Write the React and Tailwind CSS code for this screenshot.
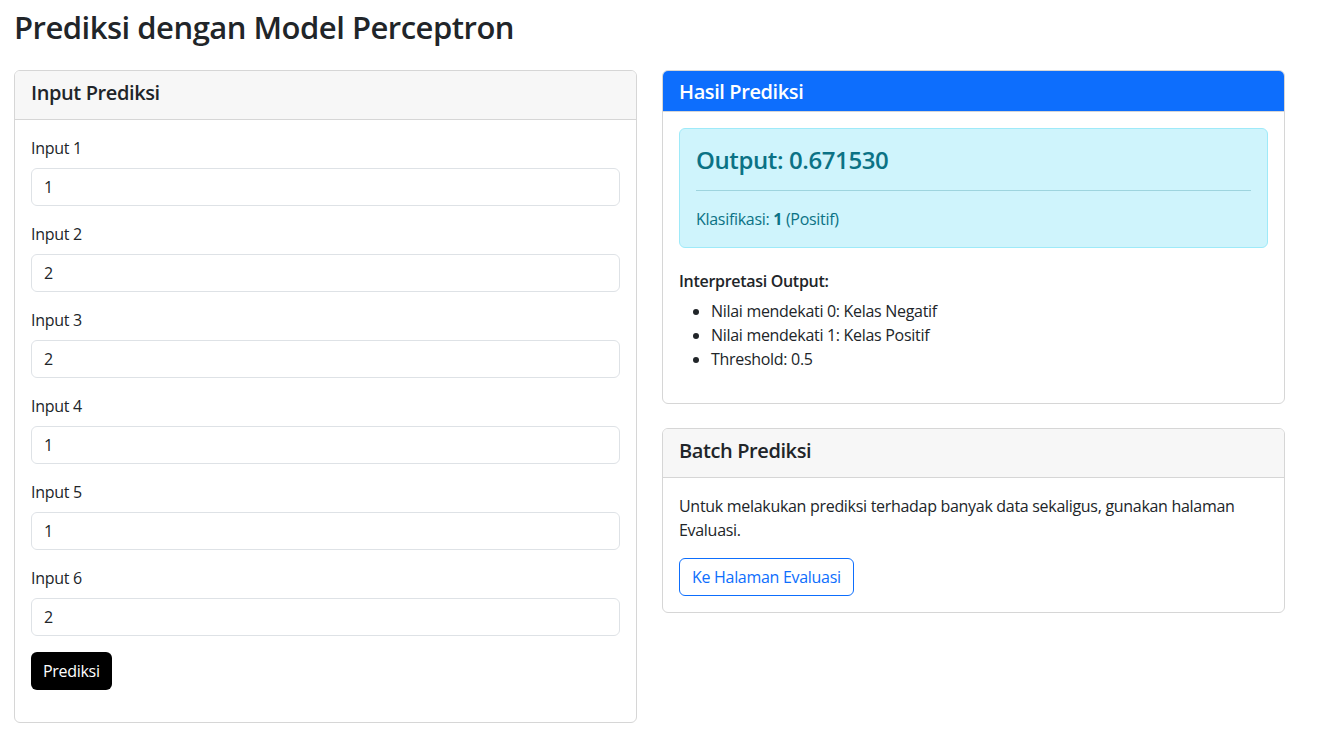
const inputs = [
  { label: 'Input 1', value: '1' },
  { label: 'Input 2', value: '2' },
  { label: 'Input 3', value: '2' },
  { label: 'Input 4', value: '1' },
  { label: 'Input 5', value: '1' },
  { label: 'Input 6', value: '2' },
];

export default function App() {
  return (
    <div className="min-h-screen bg-white pl-[14px] pr-[32px] text-[#212529] font-['Open_Sans',sans-serif] tracking-[-0.3px]">
      <h1 className="pt-[3px] text-[31px] leading-[48px] font-semibold tracking-[-0.5px] mb-[19px]">Prediksi dengan Model Perceptron</h1>

      <div className="grid grid-cols-2 gap-[25px] items-start">
        {/* Input card */}
        <div className="border border-[#d6d6d6] rounded-md overflow-hidden">
          <div className="bg-[#f7f7f7] border-b border-[#d6d6d6] px-4 pt-[10px] pb-[14px]">
            <h5 className="text-[20px] leading-6 font-semibold tracking-[-0.4px]">Input Prediksi</h5>
          </div>
          <div className="p-4 pb-8">
            {inputs.map((inp) => (
              <div key={inp.label} className="mb-4">
                <label className="block text-[16px] leading-6 mb-2">{inp.label}</label>
                <input
                  defaultValue={inp.value}
                  className="block w-full h-[38px] px-3 border border-[#dee2e6] rounded-md text-[16px] outline-none"
                />
              </div>
            ))}
            <button className="h-[38px] px-3 bg-black text-white rounded-md text-[16px]">Prediksi</button>
          </div>
        </div>

        {/* Right column */}
        <div className="flex flex-col gap-6">
          <div className="border border-[#d6d6d6] rounded-md overflow-hidden">
            <div className="bg-[#0d6efd] border-b border-[#d6d6d6] px-4 pt-[9px] pb-[7px]">
              <h5 className="text-[20px] leading-6 font-semibold tracking-[-0.4px] text-white">Hasil Prediksi</h5>
            </div>
            <div className="p-4">
              <div className="bg-[#cff4fc] border border-[#9eeaf9] rounded-md p-4 text-[#0b7285]">
                <h4 className="text-[24px] leading-[29px] font-semibold tracking-[-0.4px]">Output: 0.671530</h4>
                <hr className="my-4 border-t border-[#0b7285] opacity-25" />
                <p className="text-[16px] leading-6">
                  Klasifikasi: <strong className="font-bold">1</strong> (Positif)
                </p>
              </div>
              <h6 className="mt-6 mb-2 text-[16px] leading-[19px] font-semibold">Interpretasi Output:</h6>
              <ul className="list-disc pl-8 mb-4 text-[16px] leading-6">
                <li>Nilai mendekati 0: Kelas Negatif</li>
                <li>Nilai mendekati 1: Kelas Positif</li>
                <li>Threshold: 0.5</li>
              </ul>
            </div>
          </div>

          <div className="border border-[#d6d6d6] rounded-md overflow-hidden">
            <div className="bg-[#f7f7f7] border-b border-[#d6d6d6] px-4 pt-[10px] pb-[14px]">
              <h5 className="text-[20px] leading-6 font-semibold tracking-[-0.4px]">Batch Prediksi</h5>
            </div>
            <div className="p-4">
              <p className="text-[16px] leading-6 mb-4">
                Untuk melakukan prediksi terhadap banyak data sekaligus, gunakan halaman Evaluasi.
              </p>
              <button className="h-[38px] px-3 border border-[#0d6efd] text-[#0d6efd] rounded-md text-[16px]">
                Ke Halaman Evaluasi
              </button>
            </div>
          </div>
        </div>
      </div>
    </div>
  );
}
